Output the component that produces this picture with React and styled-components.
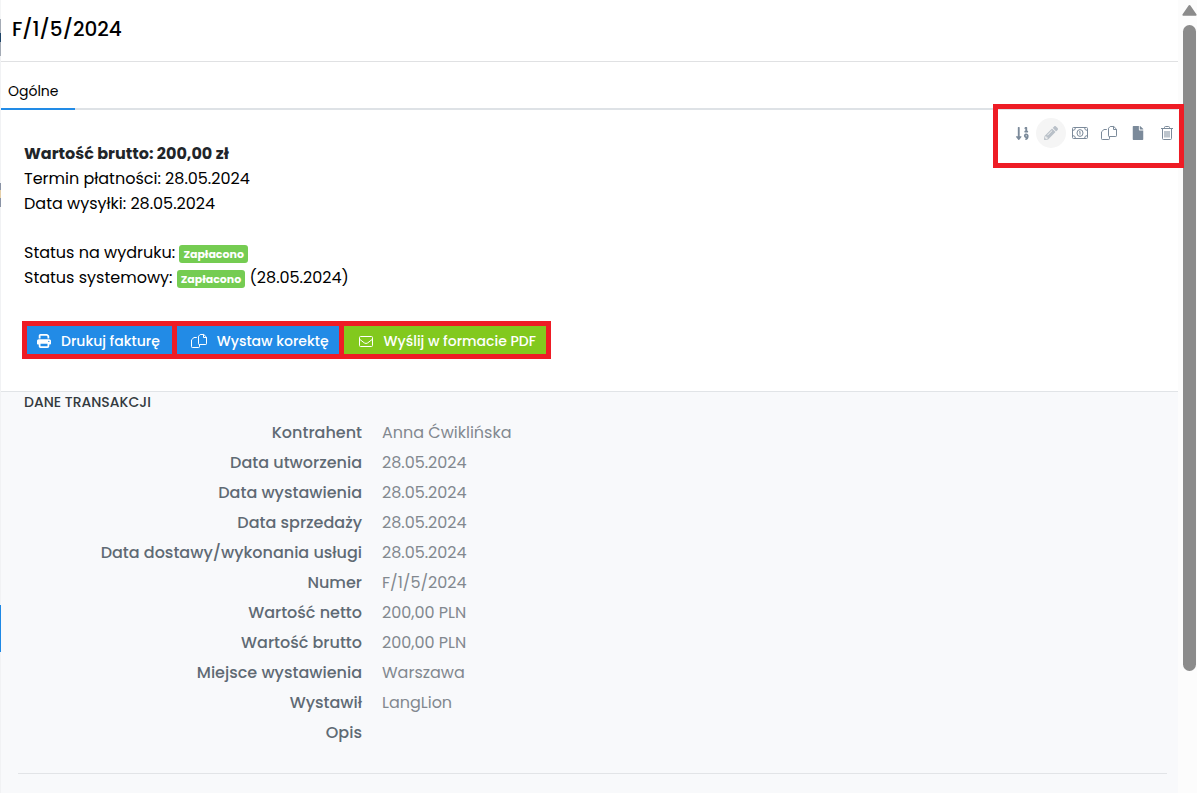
import React from 'react'
import styled, { createGlobalStyle } from 'styled-components'
import { FaSortNumericDown, FaPencilAlt, FaFile } from 'react-icons/fa'
import { FaPrint } from 'react-icons/fa6'

const GlobalStyle = createGlobalStyle`
  * { box-sizing: border-box; }

  body {
    margin: 0;
    color: #000000;
    font-family: Poppins, Inter, "Liberation Sans", sans-serif;
    font-size: 16px;
    line-height: 25px;
  }
`

const PageDiv = styled.div`
  display: flex;
  height: 100vh;
  overflow: hidden;
`

const BackdropDiv = styled.div`
  flex: 0 0 1px;
  background: linear-gradient(
    #f4f5f6 19px,
    #a4abb5 19px 33px,
    #1d4468 33px 42px,
    #a4abb5 42px 56px,
    #f1f2f4 56px 183px,
    #8a93a5 183px 190px,
    #e5cfa8 190px 198px,
    #8a93a5 198px 207px,
    #f1f2f4 207px 605px,
    #1e88e5 605px 652px,
    #f1f2f4 652px
  );
`

const PanelMain = styled.main`
  position: relative;
  flex: 1;
  min-width: 0;
  display: flex;
  flex-direction: column;
  background: #ffffff;
`

const HeaderDiv = styled.header`
  padding: 13px 11px 16px;
  border-bottom: 1px solid #e0e1e3;
`

const TitleH1 = styled.h1`
  margin: 0;
  font-weight: 500;
  font-size: 20px;
  line-height: 32px;
`

const TabsNav = styled.nav`
  display: flex;
  margin-top: 17px;
  border-bottom: 2px solid #dee2e6;
`

const TabLink = styled.a`
  padding: 0 16px 5px 7px;
  margin-bottom: -2px;
  border-bottom: 2px solid #228be6;
  color: #000000;
  font-size: 14px;
  line-height: 24px;
  text-decoration: none;
`

const ToolbarDiv = styled.div`
  position: absolute;
  z-index: 1;
  top: 104px;
  right: -6px;
  display: flex;
  gap: 5px;
  padding: 12px 0 18px 12px;
  border: 5px solid #ee1c25;
`

const IconButton = styled.button`
  display: flex;
  align-items: center;
  justify-content: center;
  width: 24px;
  height: 24px;
  padding: 0;
  border: 0;
  border-radius: 50%;
  background: ${({ $active }) => ($active ? '#f5f5f5' : 'transparent')};
  box-shadow: ${({ $active }) => ($active ? '0 0 0 3px #f5f5f5' : 'none')};
  color: ${({ $active }) => ($active ? '#b9c0c8' : '#7b8a9a')};
`

const SummarySection = styled.section`
  padding: 31px 23px 32px;
`

const SummaryP = styled.p`
  margin: 0 0 24px;
`

const AmountStrong = styled.strong`
  font-weight: 700;
  color: #212529;
`

const BadgeSpan = styled.span`
  display: inline-block;
  padding: 0 4px;
  border-radius: 3px;
  background: #75cc52;
  color: #ffffff;
  font-weight: 700;
  font-size: 11px;
  line-height: 18px;
`

const ActionsDiv = styled.div`
  display: flex;
  width: fit-content;
  gap: 5px;
  margin: 31px 0 0 -2px;
  border: 5px solid #ee1c25;
  background: #ee1c25;
`

const ActionButton = styled.button`
  display: flex;
  align-items: center;
  gap: 10px;
  height: 28px;
  padding: ${({ $wide }) => ($wide ? '2px 10px 0 14px' : '2px 12px 0 10px')};
  border: 0;
  background: ${({ $green }) => ($green ? '#82c91e' : '#228be6')};
  color: #ffffff;
  font-family: inherit;
  font-weight: 500;
  font-size: 14px;
  white-space: nowrap;

  svg { flex: none; }
`

const DataSection = styled.section`
  flex: 1;
  border-top: 1px solid #e1e4e7;
  background: #f8f9fb;
`

const SectionH2 = styled.h2`
  margin: 0;
  padding: 0 23px;
  color: #343a40;
  font-weight: 500;
  font-size: 14px;
  line-height: 20px;
`

const DataDl = styled.dl`
  display: grid;
  grid-template-columns: 338px 1fr;
  column-gap: 20px;
  margin: 6px 0 25px;
  padding: 0 23px;
  line-height: 30px;
`

const LabelDt = styled.dt`
  color: #5f6a74;
  font-weight: 500;
  text-align: right;
`

const ValueDd = styled.dd`
  margin: 0;
  color: #82888f;
`

const DividerHr = styled.hr`
  margin: 0 11px 0 17px;
  border: 0;
  border-top: 1px solid #e2e4e7;
`

const ScrollbarDiv = styled.div`
  flex: 0 0 19px;
  display: flex;
  flex-direction: column;
  align-items: center;
  gap: 9px;
  padding: 5px 0 0 4px;
  background: #fcfcfc;
`

const ThumbDiv = styled.div`
  width: 13px;
  height: 82%;
  border-radius: 7px;
  background: #8b8b8b;
`

const CopyIcon = () => (
  <svg width="16" height="16" viewBox="0 0 16 16" fill="none" stroke="currentColor" aria-hidden="true">
    <path d="M5.8 4.5H3L.5 6.8v6.9a.8.8 0 0 0 .8.8h6.4a.8.8 0 0 0 .8-.8v-2" />
    <path d="M9.2 1.5h3.6l2.7 2.7v6.6a.7.7 0 0 1-.7.7H8.2a.7.7 0 0 1-.7-.7V3.2z" />
    <path d="M12.5 1.5v3h3" />
  </svg>
)

const MoneyIcon = () => (
  <svg width="18" height="14" viewBox="0 0 18 14" fill="none" stroke="currentColor" aria-hidden="true">
    <rect x="1.5" y="1.5" width="15" height="11" rx="1" />
    <path d="M1.5 4.5a3 3 0 0 0 3-3M16.5 4.5a3 3 0 0 1-3-3M1.5 9.5a3 3 0 0 1 3 3M16.5 9.5a3 3 0 0 0-3 3" />
    <ellipse cx="9" cy="7" rx="3" ry="3.4" />
    <path d="M8.2 6l.8-.6v3.2" />
  </svg>
)

const MailIcon = () => (
  <svg width="16" height="16" viewBox="0 0 16 16" fill="none" stroke="currentColor" aria-hidden="true">
    <rect x="1.5" y="3.5" width="13" height="10" rx="1" />
    <path d="M1.5 6.2l4.8 3.7q1.7 1.2 3.4 0l4.8-3.7" />
  </svg>
)

const TrashIcon = () => (
  <svg width="14" height="16" viewBox="0 0 14 16" fill="none" stroke="currentColor" aria-hidden="true">
    <path d="M1 3.5h12M4.5 3.5v-1a1 1 0 0 1 1-1h3a1 1 0 0 1 1 1v1M2.5 3.5v10a1 1 0 0 0 1 1h7a1 1 0 0 0 1-1v-10M5 6v6.5M7 6v6.5M9 6v6.5" />
  </svg>
)

const tools = [
  { label: 'Sortuj', icon: <FaSortNumericDown size={15} /> },
  { label: 'Edytuj', icon: <FaPencilAlt size={14} />, active: true },
  { label: 'Płatność', icon: <MoneyIcon /> },
  { label: 'Kopiuj', icon: <CopyIcon /> },
  { label: 'Dokument', icon: <FaFile size={14} /> },
  { label: 'Usuń', icon: <TrashIcon /> },
]

const transaction = [
  ['Kontrahent', 'Anna Ćwiklińska'],
  ['Data utworzenia', '28.05.2024'],
  ['Data wystawienia', '28.05.2024'],
  ['Data sprzedaży', '28.05.2024'],
  ['Data dostawy/wykonania usługi', '28.05.2024'],
  ['Numer', 'F/1/5/2024'],
  ['Wartość netto', '200,00 PLN'],
  ['Wartość brutto', '200,00 PLN'],
  ['Miejsce wystawienia', 'Warszawa'],
  ['Wystawił', 'LangLion'],
  ['Opis', ''],
]

const App = () => (
  <PageDiv>
    <GlobalStyle />
    <BackdropDiv />
    <PanelMain>
      <HeaderDiv>
        <TitleH1>F/1/5/2024</TitleH1>
      </HeaderDiv>
      <TabsNav>
        <TabLink href="#general">Ogólne</TabLink>
      </TabsNav>
      <ToolbarDiv>
        {tools.map(({ label, icon, active }) => (
          <IconButton key={label} type="button" aria-label={label} $active={active}>
            {icon}
          </IconButton>
        ))}
      </ToolbarDiv>

      <SummarySection id="general">
        <SummaryP>
          <AmountStrong>Wartość brutto: 200,00 zł</AmountStrong><br />
          Termin płatności: 28.05.2024<br />
          Data wysyłki: 28.05.2024
        </SummaryP>
        <SummaryP>
          Status na wydruku: <BadgeSpan>Zapłacono</BadgeSpan><br />
          Status systemowy: <BadgeSpan>Zapłacono</BadgeSpan> (28.05.2024)
        </SummaryP>
        <ActionsDiv>
          <ActionButton type="button">
            <FaPrint size={14} /> Drukuj fakturę
          </ActionButton>
          <ActionButton type="button" $wide>
            <CopyIcon /> Wystaw korektę
          </ActionButton>
          <ActionButton type="button" $wide $green>
            <MailIcon /> Wyślij w formacie PDF
          </ActionButton>
        </ActionsDiv>
      </SummarySection>

      <DataSection>
        <SectionH2>DANE TRANSAKCJI</SectionH2>
        <DataDl>
          {transaction.map(([label, value]) => (
            <React.Fragment key={label}>
              <LabelDt>{label}</LabelDt>
              <ValueDd>{value}</ValueDd>
            </React.Fragment>
          ))}
        </DataDl>
        <DividerHr />
      </DataSection>
    </PanelMain>
    <ScrollbarDiv aria-hidden="true">
      <svg width="15" height="11" viewBox="0 0 15 11" fill="#8b8b8b">
        <path d="M6.6.6a1 1 0 0 1 1.8 0l6 8.6a1 1 0 0 1-.9 1.6h-12a1 1 0 0 1-.9-1.6z" />
      </svg>
      <ThumbDiv />
    </ScrollbarDiv>
  </PageDiv>
)

export default App
